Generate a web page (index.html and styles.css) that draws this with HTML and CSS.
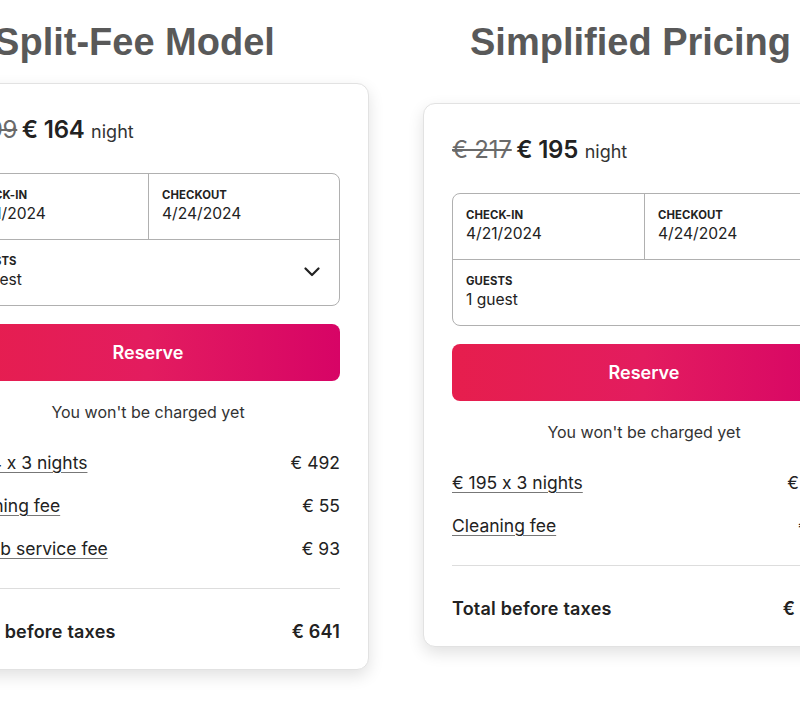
FILE: index.html
```html
<!DOCTYPE html>
<html lang="en">
<head>
<meta charset="utf-8">
<title>Split-Fee vs Simplified Pricing</title>
<link rel="stylesheet" href="styles.css">
</head>
<body>
<div class="page">
  <section class="column">
    <h1 class="heading">Split-Fee Model</h1>
    <div class="card">
      <div class="price"><span class="old">€ 199</span> <span class="now">€ 164</span> <span class="unit">night</span></div>
      <div class="picker">
        <div class="dates">
          <div class="field"><div class="label">CHECK-IN</div><div class="value">4/21/2024</div></div>
          <div class="field field-right"><div class="label">CHECKOUT</div><div class="value">4/24/2024</div></div>
        </div>
        <div class="field guests">
          <div><div class="label">GUESTS</div><div class="value">1 guest</div></div>
          <svg class="chevron" viewBox="0 0 16 10" width="16" height="10"><polyline points="1.5,1.5 8,8 14.5,1.5" fill="none" stroke="#222" stroke-width="2.2" stroke-linecap="round" stroke-linejoin="round"/></svg>
        </div>
      </div>
      <button class="reserve">Reserve</button>
      <p class="note">You won't be charged yet</p>
      <div class="rows">
        <div class="row"><span class="link">€ 164 x 3 nights</span><span>€ 492</span></div>
        <div class="row"><span class="link">Cleaning fee</span><span>€ 55</span></div>
        <div class="row"><span class="link">Airbnb service fee</span><span>€ 93</span></div>
      </div>
      <div class="total"><span>Total before taxes</span><span>€ 641</span></div>
    </div>
  </section>
  <section class="column">
    <h1 class="heading">Simplified Pricing</h1>
    <div class="card card-low">
      <div class="price"><span class="old">€ 217</span> <span class="now">€ 195</span> <span class="unit">night</span></div>
      <div class="picker">
        <div class="dates">
          <div class="field"><div class="label">CHECK-IN</div><div class="value">4/21/2024</div></div>
          <div class="field field-right"><div class="label">CHECKOUT</div><div class="value">4/24/2024</div></div>
        </div>
        <div class="field guests">
          <div><div class="label">GUESTS</div><div class="value">1 guest</div></div>
          <svg class="chevron" viewBox="0 0 16 10" width="16" height="10"><polyline points="1.5,1.5 8,8 14.5,1.5" fill="none" stroke="#222" stroke-width="2.2" stroke-linecap="round" stroke-linejoin="round"/></svg>
        </div>
      </div>
      <button class="reserve">Reserve</button>
      <p class="note">You won't be charged yet</p>
      <div class="rows">
        <div class="row"><span class="link">€ 195 x 3 nights</span><span>€ 585</span></div>
        <div class="row"><span class="link">Cleaning fee</span><span>€ 55</span></div>
      </div>
      <div class="total"><span>Total before taxes</span><span>€ 640</span></div>
    </div>
  </section>
</div>
</body>
</html>
```
FILE: styles.css
```css
html, body {
  margin: 0;
  padding: 0;
  background: #fff;
  overflow: hidden;
}
body {
  width: 800px;
  height: 722px;
}
.page {
  display: flex;
  gap: 54px;
  margin-left: -73px;
  padding-top: 21px;
  width: 938px;
}
.column {
  width: 442px;
  flex: none;
  display: flex;
  flex-direction: column;
}
.heading {
  margin: 0;
  padding-right: 27px;
  text-align: center;
  font-family: "Liberation Sans", Arial, sans-serif;
  font-weight: bold;
  font-size: 38px;
  line-height: 42px;
  color: #595959;
}
.card {
  margin-top: 20px;
  box-sizing: border-box;
  width: 442px;
  border: 1px solid #e2e2e2;
  border-radius: 12px;
  box-shadow: 0 6px 16px rgba(0, 0, 0, 0.12);
  padding: 31px 28px 25px;
  font-family: Inter, "Noto Sans", sans-serif;
  font-feature-settings: "calt" 0;
  color: #222;
  background: #fff;
}
.card-low {
  margin-top: 40px;
}
.price {
  height: 30px;
  line-height: 30px;
  white-space: nowrap;
}
.old {
  font-size: 24px;
  color: #6a6a6a;
  text-decoration: line-through;
  text-decoration-thickness: 2px;
  letter-spacing: -0.2px;
}
.now {
  font-size: 24px;
  font-weight: 600;
  letter-spacing: -0.2px;
}
.unit {
  font-size: 18px;
  color: #333;
  margin-left: 2px;
}
.picker {
  margin-top: 28px;
  border: 1px solid #b0b0b0;
  border-radius: 8px;
}
.dates {
  display: grid;
  grid-template-columns: 1fr 1fr;
  border-bottom: 1px solid #b0b0b0;
}
.field {
  padding: 13px 13px 14px;
  height: 38px;
}
.field-right {
  border-left: 1px solid #b0b0b0;
}
.guests {
  display: flex;
  align-items: center;
  justify-content: space-between;
  padding-right: 19px;
}
.label {
  font-size: 11.3px;
  font-weight: 700;
  line-height: 16px;
  letter-spacing: 0.1px;
}
.value {
  font-size: 15.6px;
  line-height: 22px;
  color: #222;
}
.chevron {
  display: block;
}
.reserve {
  display: block;
  width: 100%;
  margin-top: 18px;
  height: 57px;
  border: 0;
  border-radius: 8px;
  background: linear-gradient(to right, #e61e4d 0%, #e31c5f 50%, #d70466 100%);
  color: #fff;
  font-family: Inter, "Noto Sans", sans-serif;
  font-size: 18px;
  font-weight: 600;
}
.note {
  margin: 21px 0 0;
  text-align: center;
  font-size: 16px;
  line-height: 20px;
  color: #333;
}
.rows {
  margin-top: 29px;
  display: flex;
  flex-direction: column;
  gap: 19px;
  padding-bottom: 27px;
  border-bottom: 1px solid #dddddd;
}
.row {
  display: flex;
  justify-content: space-between;
  font-size: 17.5px;
  line-height: 24px;
}
.link {
  text-decoration: underline;
  text-decoration-color: #777;
  text-underline-offset: 3px;
}
.total {
  margin-top: 31px;
  display: flex;
  justify-content: space-between;
  font-size: 18px;
  line-height: 24px;
  font-weight: 600;
  letter-spacing: 0.2px;
}
```
